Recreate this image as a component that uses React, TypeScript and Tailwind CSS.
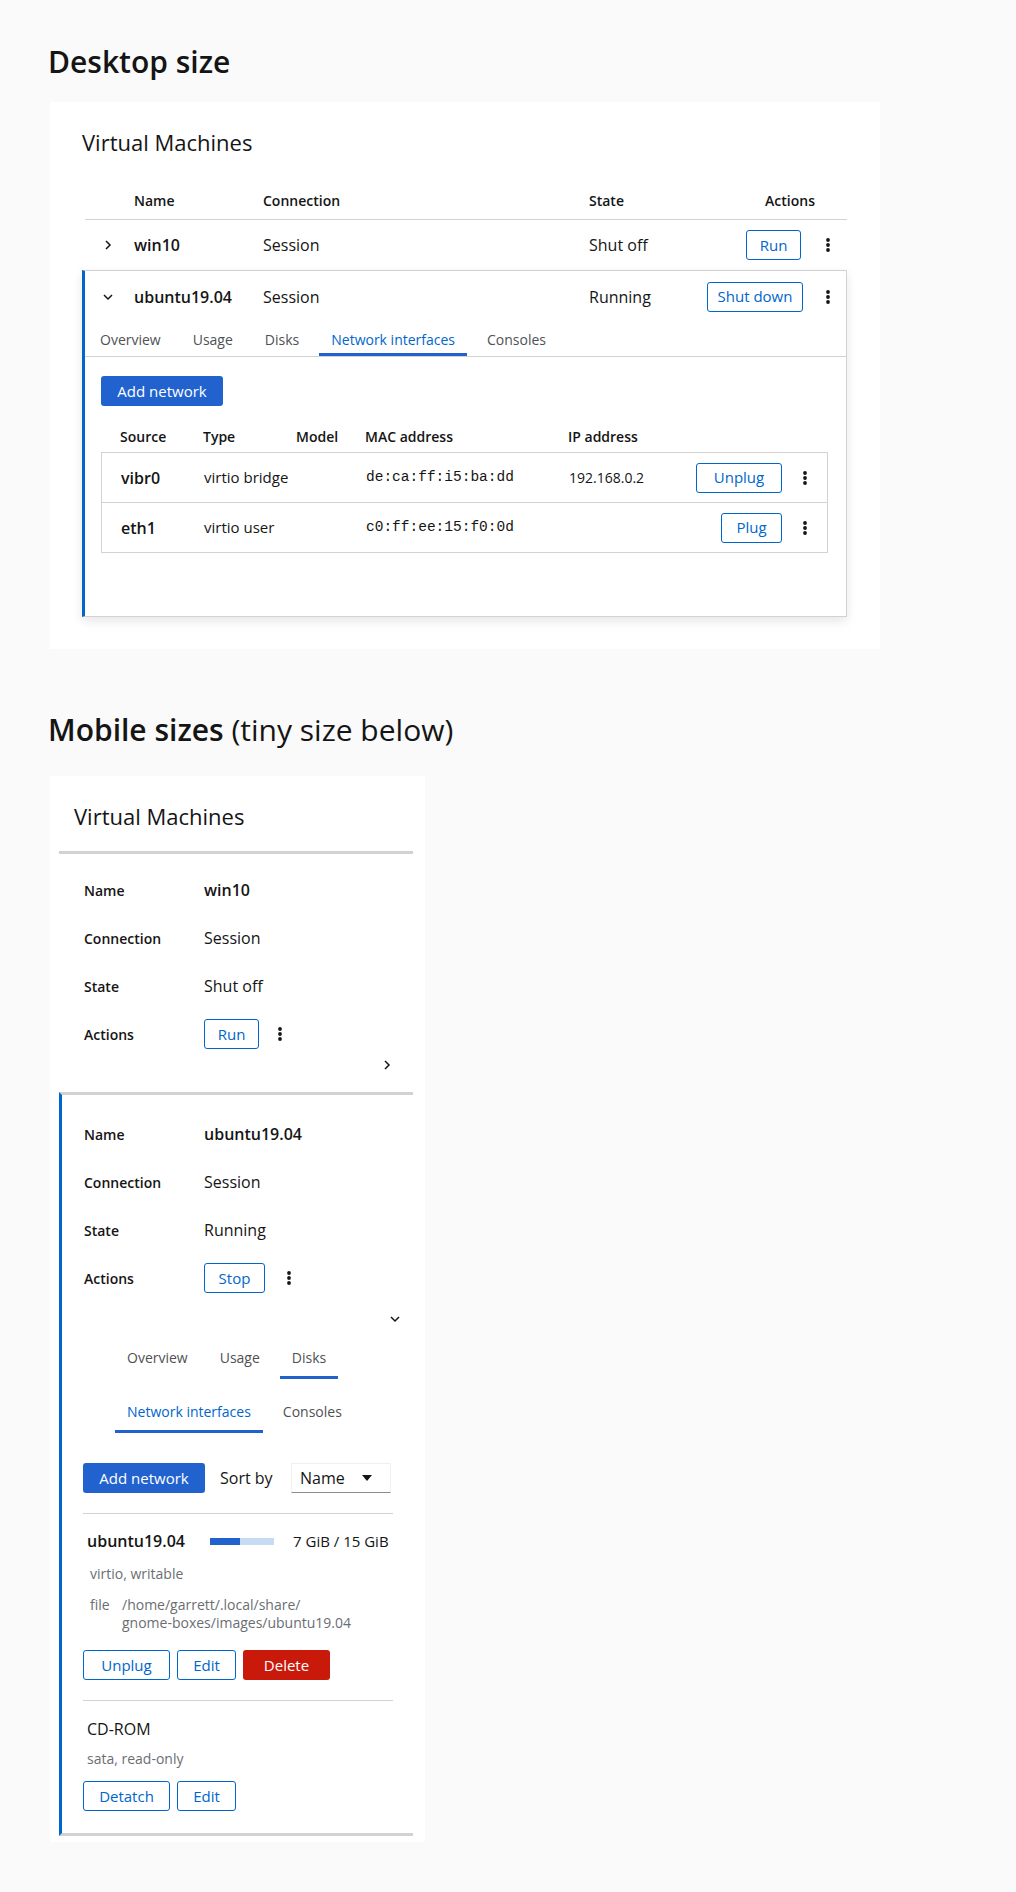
import React from "react";

const Kebab = () => (
  <span className="flex w-[30px] justify-center text-[#151515]">
    <svg width="4" height="14" viewBox="0 0 4 14" fill="currentColor">
      <circle cx="2" cy="2" r="1.9" />
      <circle cx="2" cy="7" r="1.9" />
      <circle cx="2" cy="12" r="1.9" />
    </svg>
  </span>
);

const ChevronRight = () => (
  <svg width="8" height="10" viewBox="0 0 8 10" fill="none" stroke="#151515" strokeWidth="1.5">
    <polyline points="2,1 6,5 2,9" />
  </svg>
);

const ChevronDown = () => (
  <svg width="10" height="8" viewBox="0 0 10 8" fill="none" stroke="#151515" strokeWidth="1.5">
    <polyline points="1,2 5,6 9,2" />
  </svg>
);

function OutlineBtn({ children, w }: { children: React.ReactNode; w: string }) {
  return (
    <button
      className={`flex h-[30px] items-center justify-center rounded-[3px] border border-[#0066cc] bg-white text-[15px] text-[#0066cc] ${w}`}
    >
      {children}
    </button>
  );
}

const PrimaryBtn = ({ children }: { children: React.ReactNode }) => (
  <button className="flex h-[30px] w-[122px] items-center justify-center rounded-[3px] bg-[#2162cf] text-[15px] text-white">
    {children}
  </button>
);

const nics = [
  { src: "vibr0", type: "virtio bridge", mac: "de:ca:ff:i5:ba:dd", ip: "192.168.0.2", action: "Unplug", w: "w-[86px]" },
  { src: "eth1", type: "virtio user", mac: "c0:ff:ee:15:f0:0d", ip: "", action: "Plug", w: "w-[61px]" },
];

function DesktopView() {
  return (
    <div className="ml-[2px] mt-[22px] w-[830px] bg-white pb-[32px] pl-[32px] pr-[33px] pt-[26px]">
      <h3 className="h-[28px] text-[22px] leading-[28px]">Virtual Machines</h3>

      <div className="ml-[3px] mt-[26px]">
        {/* header */}
        <div className="flex h-[38px] items-center border-b border-[#d2d2d2] text-[14px] font-semibold">
          <div className="w-[49px]" />
          <div className="w-[129px]">Name</div>
          <div className="w-[326px]">Connection</div>
          <div className="flex-1">State</div>
          <div className="pr-[32px]">Actions</div>
        </div>

        {/* win10 */}
        <div className="flex h-[50px] items-center text-[16px]">
          <div className="w-[49px] pl-[19px]">
            <ChevronRight />
          </div>
          <div className="w-[129px] font-semibold">win10</div>
          <div className="w-[326px]">Session</div>
          <div className="flex-1">Shut off</div>
          <div className="flex items-center gap-[12px] pr-[4px]">
            <OutlineBtn w="w-[55px]">Run</OutlineBtn>
            <Kebab />
          </div>
        </div>
      </div>

      {/* ubuntu expanded */}
      <div className="border border-l-[3px] border-[#d2d2d2] border-l-[#0066cc] shadow-[0_4px_10px_rgba(0,0,0,0.1)]">
        <div className="flex h-[51px] items-center text-[16px]">
          <div className="w-[49px] pl-[18px]">
            <ChevronDown />
          </div>
          <div className="w-[129px] font-semibold">ubuntu19.04</div>
          <div className="w-[326px]">Session</div>
          <div className="flex-1">Running</div>
          <div className="flex items-center gap-[10px] pr-[3px]">
            <OutlineBtn w="w-[96px]">Shut down</OutlineBtn>
            <Kebab />
          </div>
        </div>

        <div className="flex gap-[8px] border-b border-[#d2d2d2] pl-[3px] text-[14px]">
          {["Overview", "Usage", "Disks", "Network interfaces", "Consoles"].map((t) => (
            <div
              key={t}
              className={`flex h-[34px] items-center border-b-[3px] px-[12px] pt-[3px] ${
                t === "Network interfaces" ? "border-[#2162cf] text-[#0066cc]" : "border-transparent text-[#4f5255]"
              }`}
            >
              {t}
            </div>
          ))}
        </div>

        <div className="pb-[63px] pl-[16px] pr-[18px] pt-[19px]">
          <PrimaryBtn>Add network</PrimaryBtn>

          <div className="mt-[14px] flex h-[32px] items-center pl-[19px] text-[14px] font-semibold">
            <div className="w-[83px]">Source</div>
            <div className="w-[93px]">Type</div>
            <div className="w-[69px]">Model</div>
            <div className="w-[203px]">MAC address</div>
            <div>IP address</div>
          </div>

          <div className="border border-[#d2d2d2]">
            {nics.map((n, i) => (
              <div
                key={n.src}
                className={`flex h-[49px] items-center pl-[19px] pr-[7px] ${i > 0 ? "h-[50px] border-t border-[#d2d2d2]" : ""}`}
              >
                <div className="w-[83px] text-[16px] font-semibold">{n.src}</div>
                <div className="w-[162px] text-[15px]">{n.type}</div>
                <div className="w-[203px] font-['Liberation_Mono',monospace] text-[14.5px]">{n.mac}</div>
                <div className="flex-1 text-[14px]">{n.ip}</div>
                <div className="flex items-center gap-[8px]">
                  <OutlineBtn w={n.w}>{n.action}</OutlineBtn>
                  <Kebab />
                </div>
              </div>
            ))}
          </div>
        </div>
      </div>
    </div>
  );
}

function MobileRow({ label, children }: { label: string; children: React.ReactNode }) {
  return (
    <div className="flex h-[48px] items-center">
      <div className="w-[120px] text-[14px] font-semibold">{label}</div>
      <div className="flex items-center text-[16px]">{children}</div>
    </div>
  );
}

function MobileView() {
  return (
    <div className="ml-[2px] mt-[28px] w-[375px] bg-white pb-[6px] pt-[26px]">
      <h3 className="ml-[24px] h-[28px] text-[22px] leading-[28px]">Virtual Machines</h3>

      <div className="ml-[9px] mr-[12px] mt-[21px]">
        {/* win10 */}
        <div className="border-t-[3px] border-[#d2d2d2] pl-[25px] pr-[22px] pt-[12px]">
          <MobileRow label="Name">
            <span className="font-semibold">win10</span>
          </MobileRow>
          <MobileRow label="Connection">Session</MobileRow>
          <MobileRow label="State">Shut off</MobileRow>
          <MobileRow label="Actions">
            <OutlineBtn w="w-[55px]">Run</OutlineBtn>
            <span className="ml-[6px]">
              <Kebab />
            </span>
          </MobileRow>
          <div className="mb-[20px] flex h-[14px] items-center justify-end">
            <ChevronRight />
          </div>
        </div>

        {/* ubuntu expanded */}
        <div className="border-y-[3px] border-l-[3px] border-[#d2d2d2] border-l-[#0066cc]">
          <div className="pl-[22px] pr-[13px] pt-[15px]">
            <MobileRow label="Name">
              <span className="font-semibold">ubuntu19.04</span>
            </MobileRow>
            <MobileRow label="Connection">Session</MobileRow>
            <MobileRow label="State">Running</MobileRow>
            <MobileRow label="Actions">
              <OutlineBtn w="w-[61px]">Stop</OutlineBtn>
              <span className="ml-[9px]">
                <Kebab />
              </span>
            </MobileRow>
            <div className="mt-[10px] flex h-[14px] items-center justify-end">
              <ChevronDown />
            </div>
          </div>

          <div className="ml-[53px] mt-[13px] text-[14px]">
            <div className="flex gap-[8px]">
              {["Overview", "Usage", "Disks"].map((t) => (
                <div
                  key={t}
                  className={`flex h-[40px] items-center border-b-[3px] px-[12px] ${
                    t === "Disks" ? "border-[#2162cf] text-[#4f5255]" : "border-transparent text-[#4f5255]"
                  }`}
                >
                  {t}
                </div>
              ))}
            </div>
            <div className="mt-[14px] flex gap-[8px]">
              <div className="flex h-[40px] items-center border-b-[3px] border-[#2162cf] px-[12px] text-[#0066cc]">
                Network interfaces
              </div>
              <div className="flex h-[40px] items-center border-b-[3px] border-transparent px-[12px] text-[#4f5255]">
                Consoles
              </div>
            </div>
          </div>

          <div className="pb-[22px] pl-[21px] pr-[20px] pt-[30px]">
            <div className="flex items-center">
              <PrimaryBtn>Add network</PrimaryBtn>
              <span className="ml-[15px] text-[16px] text-[#151515]">Sort by</span>
              <div className="ml-auto mr-[2px] flex h-[30px] w-[100px] items-center justify-between border border-[#f0f0f0] border-b-[#8a8d90] pl-[8px] pr-[18px] text-[16px]">
                Name
                <svg width="10" height="6" viewBox="0 0 10 6" fill="#151515">
                  <polygon points="0,0 10,0 5,6" />
                </svg>
              </div>
            </div>

            <div className="mt-[20px] border-t border-[#d2d2d2] pl-[4px]">
              <div className="mt-[15px] flex h-[24px] items-center">
                <span className="w-[123px] text-[16px] font-semibold">ubuntu19.04</span>
                <div className="flex h-[7px] w-[64px] bg-[#c7dcf2]">
                  <div className="h-full w-[30px] bg-[#2162cf]" />
                </div>
                <span className="ml-[19px] text-[15px]">7 GiB / 15 GiB</span>
              </div>
              <div className="mt-[11px] pl-[3px] text-[14px] leading-[20px] text-[#6a6e73]">virtio, writable</div>
              <div className="mt-[12px] flex pl-[3px] text-[14px] leading-[18px] text-[#6a6e73]">
                <span className="w-[32px]">file</span>
                <span>
                  /home/garrett/.local/share/
                  <br />
                  gnome-boxes/images/ubuntu19.04
                </span>
              </div>
            </div>
            <div className="mt-[18px] flex gap-[7px]">
              <OutlineBtn w="w-[87px]">Unplug</OutlineBtn>
              <OutlineBtn w="w-[59px]">Edit</OutlineBtn>
              <button className="flex h-[30px] w-[87px] items-center justify-center rounded-[3px] bg-[#c9190b] text-[15px] text-white">
                Delete
              </button>
            </div>

            <div className="mt-[20px] border-t border-[#d2d2d2] pl-[4px]">
              <div className="mt-[16px] h-[24px] text-[16px] leading-[24px]">CD-ROM</div>
              <div className="mt-[8px] text-[14px] leading-[20px] text-[#6a6e73]">sata, read-only</div>
            </div>
            <div className="mt-[12px] flex gap-[7px]">
              <OutlineBtn w="w-[87px]">Detatch</OutlineBtn>
              <OutlineBtn w="w-[59px]">Edit</OutlineBtn>
            </div>
          </div>
        </div>
      </div>
    </div>
  );
}

export default function App() {
  return (
    <main className="min-h-[1892px] w-full bg-[#fafafa] pl-[48px] pt-[44px] font-['Open_Sans',sans-serif] text-[#151515]">
      <h2 className="h-[36px] text-[30px] font-semibold leading-[36px]">Desktop size</h2>
      <DesktopView />

      <h2 className="mt-[63px] h-[36px] text-[30px] leading-[36px]">
        <span className="font-semibold">Mobile sizes</span> (tiny size below)
      </h2>
      <MobileView />
    </main>
  );
}
